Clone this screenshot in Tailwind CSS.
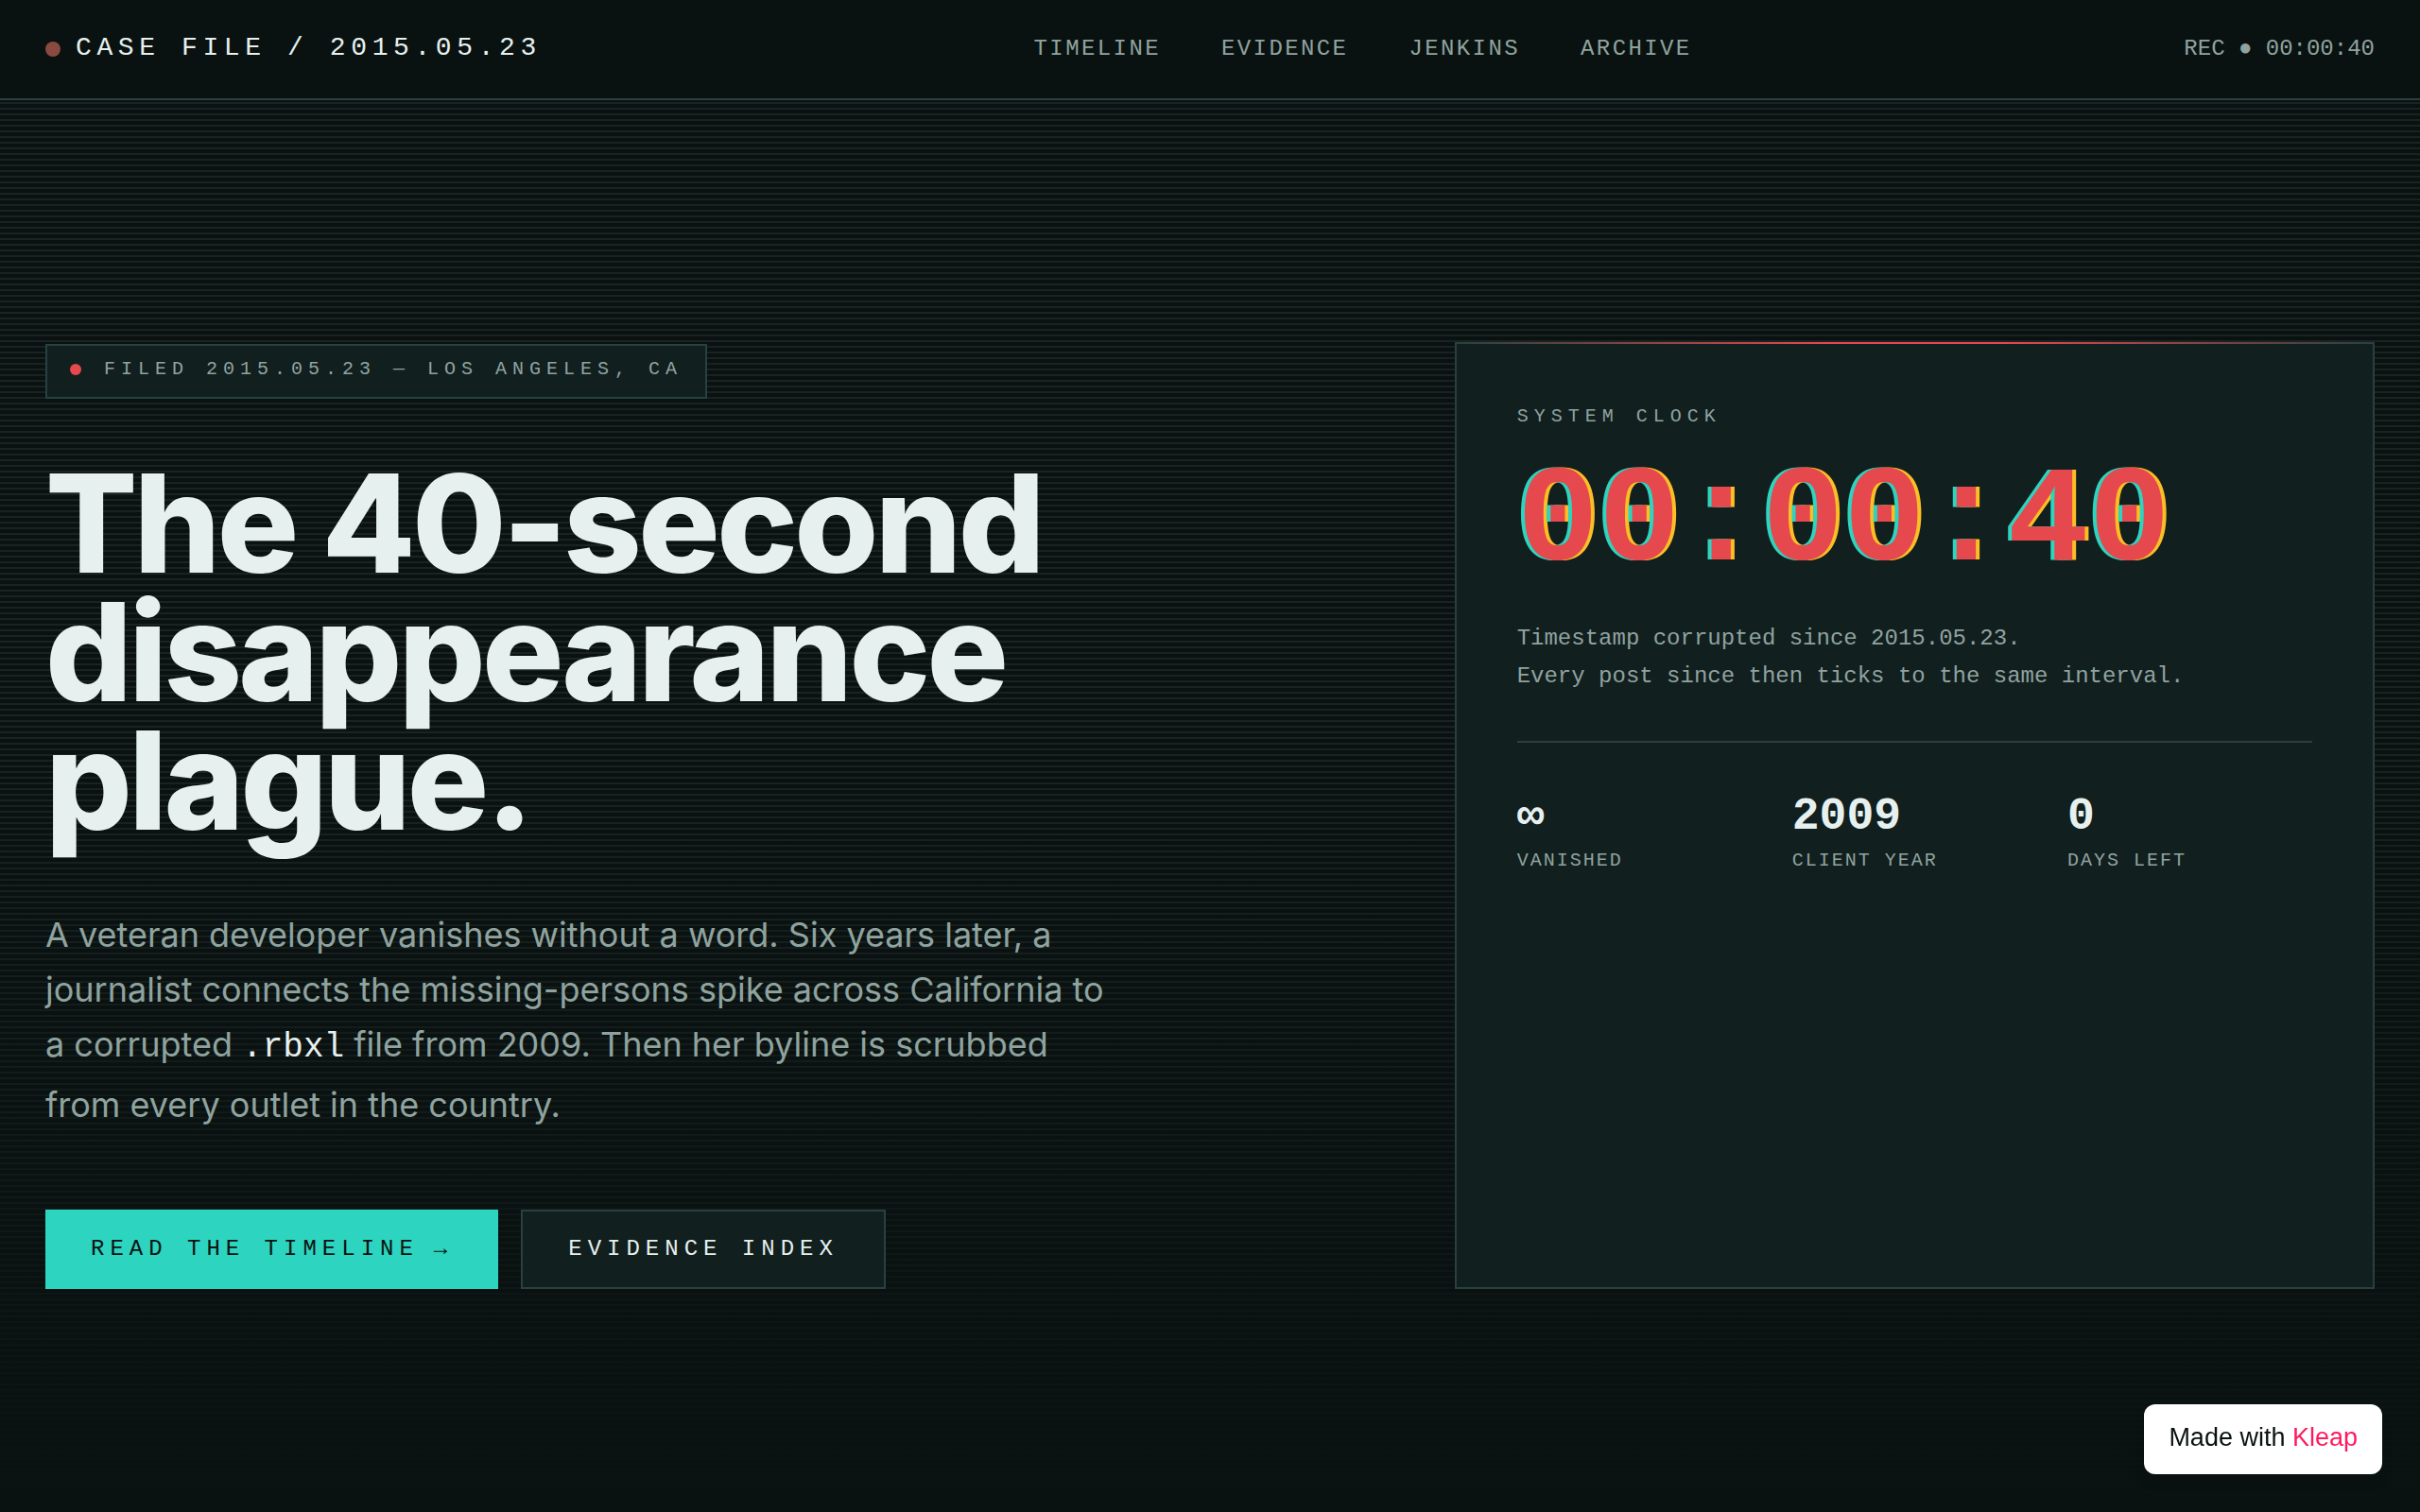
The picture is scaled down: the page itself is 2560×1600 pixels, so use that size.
<!DOCTYPE html>
<html lang="en">
<head>
  <meta charset="UTF-8" />
  <meta name="viewport" content="width=device-width, initial-scale=1.0" />
  <title>Case File / 2015.05.23</title>
  <script src="https://cdn.jsdelivr.net/npm/@tailwindcss/browser@4"></script>
</head>
<body class="min-h-screen flex flex-col bg-[#0a1211] text-[#e6f0ee] font-['Inter',sans-serif]">
  <header class="flex items-center justify-between px-12 py-8 border-b-2 border-[#284040] font-['Liberation_Mono',monospace]">
    <a href="#" class="flex items-center gap-4 text-[28px] leading-[38px] tracking-[0.2em]">
      <span class="size-4 rounded-full bg-[#8a4a3f]"></span>
      <span class="pb-0.5">CASE FILE / 2015.05.23</span>
    </a>
    <nav class="flex gap-16 text-2xl tracking-widest text-[#8fa39f]">
      <a href="#timeline">TIMELINE</a>
      <a href="#evidence">EVIDENCE</a>
      <a href="#jenkins">JENKINS</a>
      <a href="#archive">ARCHIVE</a>
    </nav>
    <div class="text-2xl text-[#8fa39f]">REC ● 00:00:40</div>
  </header>

  <!-- scanlines, fading out towards the bottom -->
  <main class="grow px-12 pt-64 pb-32 bg-[linear-gradient(to_bottom,transparent_45%,#0a1211_100%),repeating-linear-gradient(to_bottom,#0a1211_0_2px,#1a2222_2px_4px,#0a1211_4px_6px)]">
    <div class="grid grid-cols-[1.4fr_1fr] gap-32">
      <section>
        <div class="w-fit mt-0.5 flex items-center gap-6 px-6 pt-[10px] pb-[14px] border-2 border-[#284040] bg-[#121f1f] font-['Liberation_Mono',monospace] text-xl leading-[30px] tracking-[0.3em] text-[#8fa39f]">
          <span class="size-3 rounded-full bg-[#e5484d]"></span>
          <span>FILED 2015.05.23 — LOS ANGELES, CA</span>
        </div>
        <h1 class="mt-16 max-w-[1200px] text-[144px] leading-[136px] font-extrabold tracking-tight">The 40-second<br />disappearance<br />plague.</h1>
        <p class="mt-[66px] max-w-[1136px] text-4xl leading-[58px] text-[#8fa39f]">A veteran developer vanishes without a word. Six years later, a journalist connects the missing-persons spike across California to a corrupted <code class="font-['Liberation_Mono',monospace] leading-[62px] text-[#e6f0ee]">.rbxl</code> file from 2009. Then her byline is scrubbed from every outlet in the country.</p>
        <div class="mt-[82px] flex gap-6 font-['Liberation_Mono',monospace] text-2xl leading-9 tracking-[0.25em]">
          <a href="#timeline" class="flex gap-4 px-12 py-6 bg-[#2dd4bf] text-[#0a1211]">READ THE TIMELINE <span>→</span></a>
          <a href="#evidence" class="px-12 py-[22px] border-2 border-[#284040] bg-[#121f1f]">EVIDENCE INDEX</a>
        </div>
      </section>

      <aside class="relative px-16 pt-[62px] pb-16 border-2 border-[#284040] bg-[#121f1f] font-['Liberation_Mono',monospace] text-[#8fa39f]">
        <div class="absolute -inset-x-0.5 -top-0.5 h-0.5 bg-[linear-gradient(to_right,transparent,#e5484d_40%,#e5484d_60%,transparent)]"></div>
        <div class="text-xl leading-[30px] tracking-[0.3em]">SYSTEM CLOCK</div>
        <div class="mt-[26px] text-[144px] leading-[144px] font-bold text-[#e5484d] [text-shadow:-4px_0_#2dd4bf,4px_0_#fbbf24]">00:00:40</div>
        <p class="mt-[30px] text-2xl leading-10">Timestamp corrupted since 2015.05.23.<br />Every post since then ticks to the same interval.</p>
        <div class="mt-12 pt-12 grid grid-cols-3 gap-8 border-t-2 border-[#284040]">
          <div>
            <div class="text-5xl leading-[60px] font-bold text-[#e6f0ee]">∞</div>
            <div class="mt-0.5 text-xl leading-[30px] tracking-widest">VANISHED</div>
          </div>
          <div>
            <div class="text-5xl leading-[60px] font-bold text-[#e6f0ee]">2009</div>
            <div class="mt-0.5 text-xl leading-[30px] tracking-widest">CLIENT YEAR</div>
          </div>
          <div>
            <div class="text-5xl leading-[60px] font-bold text-[#e6f0ee]">0</div>
            <div class="mt-0.5 text-xl leading-[30px] tracking-widest">DAYS LEFT</div>
          </div>
        </div>
      </aside>
    </div>
  </main>

  <a href="#" class="fixed right-10 bottom-10 px-[26px] pt-[14px] pb-[18px] rounded-xl bg-white text-[#0a1211] font-['Liberation_Sans',sans-serif] text-[27px] leading-[42px] shadow-lg">Made with <span class="text-[#ff1a5e]">Kleap</span></a>
</body>
</html>
